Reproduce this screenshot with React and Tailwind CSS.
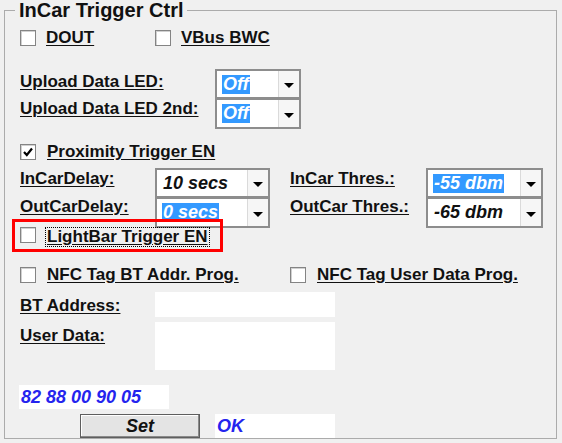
import React from 'react';

const CheckBox = ({ checked = false }) => (
  <span className="w-4 h-4 shrink-0 border border-[#848484] bg-white shadow-[inset_1px_1px_0_#d0d0d0] flex items-center justify-center">
    {checked && (
      <svg width="12" height="12" viewBox="0 0 12 12">
        <path d="M2 6 L4.8 9 L10 2.5" fill="none" stroke="#000" strokeWidth="2.2" />
      </svg>
    )}
  </span>
);

const Label = ({ children }) => (
  <span className="font-bold text-[17px] leading-[20px] underline underline-offset-2 whitespace-nowrap">{children}</span>
);

const Combo = ({ value, selected, extra = '' }) => (
  <div className={`h-[30px] border-2 border-[#8d8d8d] bg-white flex ${extra}`}>
    <div className="flex-1 flex items-center pl-[5px] overflow-hidden">
      <span
        className={`font-bold italic text-[18px] leading-[19px] px-px whitespace-nowrap ${selected ? 'bg-[#3399ff] text-white' : 'text-[#111]'
          }`}
      >
        {value}
      </span>
    </div>
    <div className="w-[21px] h-full bg-[#f6f6f6] border-l border-[#dadada] flex items-center justify-center pt-[3px]">
      <span className="w-0 h-0 border-l-[5px] border-r-[5px] border-t-[5px] border-l-transparent border-r-transparent border-t-black" />
    </div>
  </div>
);

// two combo boxes stacked so their borders meet
const ComboPair = ({ width, top, bottom }) => (
  <div className="flex flex-col" style={{ width }}>
    <Combo value={top.value} selected={top.selected} />
    <Combo value={bottom.value} selected={bottom.selected} extra="-mt-px h-[31px]" />
  </div>
);

export default function App() {
  return (
    <div className="w-[562px] h-[443px] bg-[#f0f0f0] pl-[4px] font-[Liberation_Sans,Arial,sans-serif] text-[#111]">
      <fieldset className="w-[553px] h-[439px] border border-[#ababab] pl-[15px]">
        <legend className="-ml-[5px] px-[4px] text-[20px] leading-[20px] font-bold">InCar Trigger Ctrl</legend>

        {/* DOUT / VBus */}
        <div className="mt-[10px] h-4 flex items-center">
          <div className="w-[135px] flex items-center gap-[10px]">
            <CheckBox />
            <Label>DOUT</Label>
          </div>
          <div className="flex items-center gap-[10px]">
            <CheckBox />
            <Label>VBus BWC</Label>
          </div>
        </div>

        {/* Upload LEDs */}
        <div className="mt-[23px] flex">
          <div className="w-[195px] pt-[3px] flex flex-col gap-[7px]">
            <Label>Upload Data LED:</Label>
            <Label>Upload Data LED 2nd:</Label>
          </div>
          <ComboPair width={86} top={{ value: 'Off', selected: true }} bottom={{ value: 'Off', selected: true }} />
        </div>

        {/* Proximity */}
        <div className="mt-[15px] h-4 flex items-center gap-[11px]">
          <CheckBox checked />
          <Label>Proximity Trigger EN</Label>
        </div>

        {/* Delays & thresholds */}
        <div className="mt-[8px] flex">
          <div className="w-[135px] pt-px flex flex-col gap-[8px]">
            <Label>InCarDelay:</Label>
            <Label>OutCarDelay:</Label>
          </div>
          <ComboPair width={115} top={{ value: '10 secs' }} bottom={{ value: '0 secs', selected: true }} />
          <div className="ml-[20px] w-[136px] pt-px flex flex-col gap-[8px]">
            <Label>InCar Thres.:</Label>
            <Label>OutCar Thres.:</Label>
          </div>
          <ComboPair width={117} top={{ value: '-55 dbm', selected: true }} bottom={{ value: '-65 dbm' }} />
        </div>

        {/* LightBar, highlighted */}
        <div className="relative z-10 -mt-[9px] -ml-[8px] w-[211px] h-[33px] border-[3px] border-[#ff0000] flex items-start pt-[3px] pl-[5px]">
          <span className="mt-[2px]">
            <CheckBox />
          </span>
          <span className="ml-[9px] mt-[2px] border border-dotted border-black px-px flex">
            <span className="font-bold text-[17px] leading-[18px] underline underline-offset-2 whitespace-nowrap">LightBar Trigger EN</span>
          </span>
        </div>

        {/* NFC */}
        <div className="mt-[15px] h-4 flex items-center">
          <div className="w-[270px] flex items-center gap-[11px]">
            <CheckBox />
            <Label>NFC Tag BT Addr. Prog.</Label>
          </div>
          <div className="flex items-center gap-[11px]">
            <CheckBox />
            <Label>NFC Tag User Data Prog.</Label>
          </div>
        </div>

        <div className="mt-[9px] flex">
          <div className="w-[135px] pt-[2px]">
            <Label>BT Address:</Label>
          </div>
          <div className="w-[180px] h-[25px] bg-white" />
        </div>

        <div className="mt-[4px] flex">
          <div className="w-[135px] pt-[2px]">
            <Label>User Data:</Label>
          </div>
          <div className="w-[180px] h-[48px] bg-white" />
        </div>

        <div className="mt-[15px] -ml-px w-[150px] h-[24px] bg-white pl-[2px] font-bold italic text-[18px] leading-[24px] text-[#2424ee]">
          82 88 00 90 05
        </div>

        <div className="mt-[5px] h-[24px] flex">
          <button className="ml-[60px] w-[120px] h-full bg-[#e4e4e4] border border-[#5e5e5e] shadow-[inset_-1px_-1px_0_#8a8a8a,inset_1px_1px_0_#ffffff] font-bold italic text-[18px] leading-[20px] text-[#111]">
            Set
          </button>
          <div className="ml-[15px] w-[120px] h-full bg-white pl-[2px] font-bold italic text-[18px] leading-[24px] text-[#2424ee]">
            OK
          </div>
        </div>
      </fieldset>
    </div>
  );
}
